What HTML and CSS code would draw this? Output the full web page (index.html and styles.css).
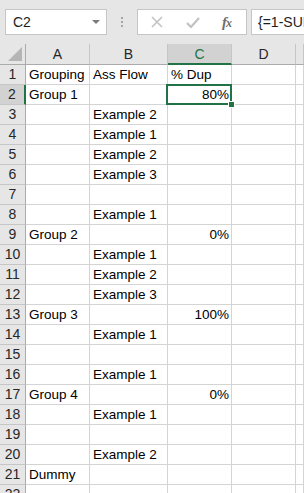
FILE: index.html
```html
<html>
<head>
    <link rel="stylesheet" href="styles.css">
</head>
<body>
    <div class="toolbar">
        <div class="name-box">
            <span>C2</span>
            <svg class="caret" width="8" height="5" viewBox="0 0 8 5"><polygon points="0,0 8,0 4,4" fill="#7a7a7a"/></svg>
        </div>
        <div class="grip"><i></i><i></i><i></i></div>
        <div class="fx-buttons">
            <svg class="btn-x" width="12" height="12" viewBox="0 0 12 12"><path d="M1 1 L11 11 M11 1 L1 11" stroke="#c2c2c2" stroke-width="1.6" fill="none"/></svg>
            <svg class="btn-ok" width="14" height="11" viewBox="0 0 14 11"><path d="M1 6 L5 10 L13 1" stroke="#c2c2c2" stroke-width="2.2" fill="none"/></svg>
            <span class="fx"><i>f</i><i class="sub">x</i></span>
        </div>
        <div class="formula">{=1-SUM(IF(FREQUENCY(IF(B3:B8&lt;&gt;"",MATCH(B3:B8,B3:B8,0)),ROW(B3:B8)-ROW(B3)+1),1))/COUNTA(B3:B8)}</div>
    </div>

    <div class="sheet">
        <div class="corner"><svg width="25" height="20" viewBox="0 0 25 20"><polygon points="22,3 22,17 8,17" fill="#b5b5b5"/></svg></div>
        <div class="col-head">A</div>
        <div class="col-head">B</div>
        <div class="col-head active">C</div>
        <div class="col-head">D</div>
        <div class="col-head"></div>

        <div class="row-head">1</div><div class="cell">Grouping</div><div class="cell">Ass Flow</div><div class="cell">% Dup</div><div class="cell"></div><div class="cell"></div>
        <div class="row-head active">2</div><div class="cell">Group 1</div><div class="cell"></div><div class="cell num selected">80%</div><div class="cell"></div><div class="cell"></div>
        <div class="row-head">3</div><div class="cell"></div><div class="cell">Example 2</div><div class="cell"></div><div class="cell"></div><div class="cell"></div>
        <div class="row-head">4</div><div class="cell"></div><div class="cell">Example 1</div><div class="cell"></div><div class="cell"></div><div class="cell"></div>
        <div class="row-head">5</div><div class="cell"></div><div class="cell">Example 2</div><div class="cell"></div><div class="cell"></div><div class="cell"></div>
        <div class="row-head">6</div><div class="cell"></div><div class="cell">Example 3</div><div class="cell"></div><div class="cell"></div><div class="cell"></div>
        <div class="row-head">7</div><div class="cell"></div><div class="cell"></div><div class="cell"></div><div class="cell"></div><div class="cell"></div>
        <div class="row-head">8</div><div class="cell"></div><div class="cell">Example 1</div><div class="cell"></div><div class="cell"></div><div class="cell"></div>
        <div class="row-head">9</div><div class="cell">Group 2</div><div class="cell"></div><div class="cell num">0%</div><div class="cell"></div><div class="cell"></div>
        <div class="row-head">10</div><div class="cell"></div><div class="cell">Example 1</div><div class="cell"></div><div class="cell"></div><div class="cell"></div>
        <div class="row-head">11</div><div class="cell"></div><div class="cell">Example 2</div><div class="cell"></div><div class="cell"></div><div class="cell"></div>
        <div class="row-head">12</div><div class="cell"></div><div class="cell">Example 3</div><div class="cell"></div><div class="cell"></div><div class="cell"></div>
        <div class="row-head">13</div><div class="cell">Group 3</div><div class="cell"></div><div class="cell num">100%</div><div class="cell"></div><div class="cell"></div>
        <div class="row-head">14</div><div class="cell"></div><div class="cell">Example 1</div><div class="cell"></div><div class="cell"></div><div class="cell"></div>
        <div class="row-head">15</div><div class="cell"></div><div class="cell"></div><div class="cell"></div><div class="cell"></div><div class="cell"></div>
        <div class="row-head">16</div><div class="cell"></div><div class="cell">Example 1</div><div class="cell"></div><div class="cell"></div><div class="cell"></div>
        <div class="row-head">17</div><div class="cell">Group 4</div><div class="cell"></div><div class="cell num">0%</div><div class="cell"></div><div class="cell"></div>
        <div class="row-head">18</div><div class="cell"></div><div class="cell">Example 1</div><div class="cell"></div><div class="cell"></div><div class="cell"></div>
        <div class="row-head">19</div><div class="cell"></div><div class="cell"></div><div class="cell"></div><div class="cell"></div><div class="cell"></div>
        <div class="row-head">20</div><div class="cell"></div><div class="cell">Example 2</div><div class="cell"></div><div class="cell"></div><div class="cell"></div>
        <div class="row-head">21</div><div class="cell">Dummy</div><div class="cell"></div><div class="cell"></div><div class="cell"></div><div class="cell"></div>
        <div class="row-head">22</div><div class="cell"></div><div class="cell"></div><div class="cell"></div><div class="cell"></div><div class="cell"></div>
    </div>
</body>
</html>
```

FILE: styles.css
```css
body {
    margin: 0;
    width: 304px;
    height: 493px;
    overflow: hidden;
    background-color: #fff;
    font-family: "Liberation Sans", Arial, sans-serif;
    color: #000;
}

.toolbar {
    height: 44px;
    background-color: #e6e6e6;
    display: flex;
    align-items: flex-start;
    padding-top: 9px;
    box-sizing: border-box;
    white-space: nowrap;
}

.name-box {
    margin-left: 5px;
    width: 102px;
    height: 26px;
    box-sizing: border-box;
    background-color: #fff;
    border: 1px solid #c6c6c6;
    display: flex;
    align-items: center;
    justify-content: space-between;
    padding: 0 6px 0 7px;
    font-size: 14px;
    color: #1e1e1e;
}

.grip {
    width: 30px;
    height: 26px;
    display: flex;
    flex-direction: column;
    align-items: center;
    justify-content: center;
    gap: 2px;
}

.grip i {
    width: 2px;
    height: 2px;
    background-color: #a6a6a6;
}

.fx-buttons {
    width: 110px;
    height: 26px;
    box-sizing: border-box;
    background-color: #fff;
    border: 1px solid #c6c6c6;
    display: flex;
    align-items: center;
    padding-left: 13px;
}

.btn-x {
    margin-right: 23px;
}

.btn-ok {
    margin-right: 22px;
}

.fx {
    font-family: "Liberation Serif", serif;
    font-size: 15px;
    color: #6e6e6e;
    font-weight: bold;
}

.fx .sub {
    font-size: 12px;
    margin-left: -1px;
}

.formula {
    margin-left: 4px;
    flex: 1;
    height: 26px;
    box-sizing: border-box;
    background-color: #fff;
    border: 1px solid #c6c6c6;
    border-right: none;
    padding-left: 6px;
    line-height: 24px;
    font-size: 14px;
    overflow: hidden;
    color: #1e1e1e;
}

.sheet {
    display: grid;
    grid-template-columns: 26px 64px 78px 64px 64px 1fr;
    grid-template-rows: 21px;
    grid-auto-rows: 20px;
    font-size: 13.5px;
}

.sheet > div {
    box-sizing: border-box;
    overflow: hidden;
    white-space: nowrap;
}

.corner {
    background-color: #e6e6e6;
    border-right: 1px solid #ababab;
    border-bottom: 1px solid #ababab;
}

.corner svg {
    display: block;
}

.col-head {
    background-color: #e6e6e6;
    border-right: 1px solid #c6c6c6;
    border-bottom: 1px solid #ababab;
    text-align: center;
    line-height: 20px;
    font-size: 14px;
    color: #262626;
}

.col-head.active {
    background-color: #d2d2d2;
    border-bottom: 2px solid #217346;
    color: #217346;
}

.row-head {
    background-color: #e6e6e6;
    border-right: 1px solid #ababab;
    border-bottom: 1px solid #c6c6c6;
    text-align: center;
    line-height: 19px;
    font-size: 14px;
    color: #262626;
}

.row-head.active {
    background-color: #d2d2d2;
    border-right: 2px solid #217346;
}

.cell {
    border-right: 1px solid #d4d4d4;
    border-bottom: 1px solid #d4d4d4;
    padding: 0 2px 0 3px;
    line-height: 20px;
}

.cell.num {
    text-align: right;
}

.cell.selected {
    position: relative;
    overflow: visible;
}

.cell.selected::before {
    content: "";
    position: absolute;
    left: -2px;
    top: -1px;
    right: -1px;
    bottom: -1px;
    border: 2px solid #217346;
}

.cell.selected::after {
    content: "";
    position: absolute;
    right: -4px;
    bottom: -4px;
    width: 5px;
    height: 5px;
    background-color: #217346;
    border: 1px solid #fff;
}
```
